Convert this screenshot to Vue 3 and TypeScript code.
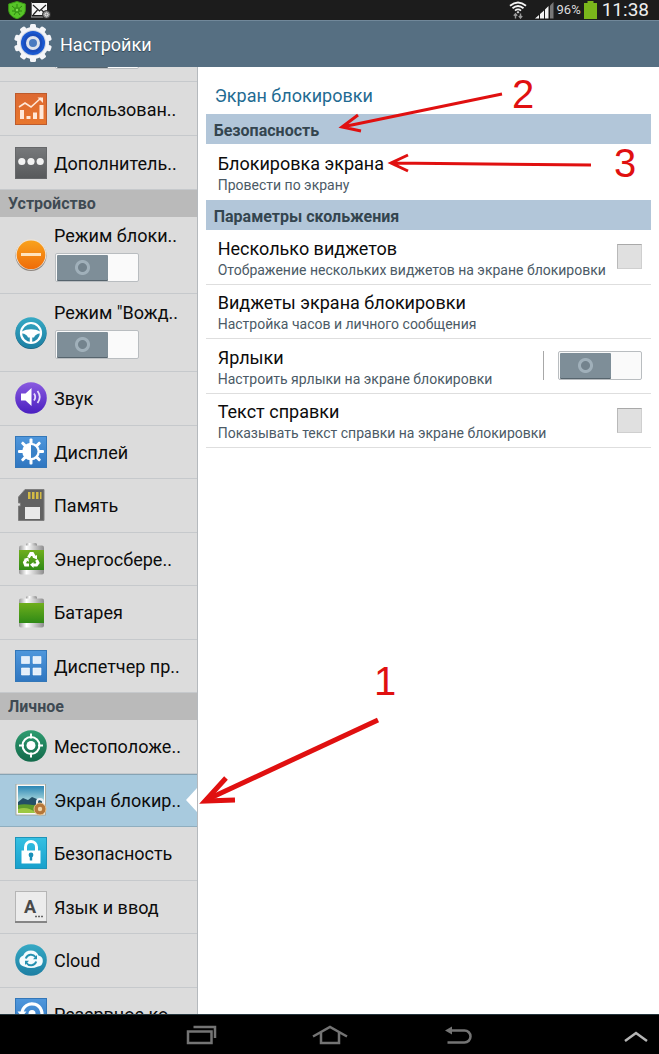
<script setup lang="ts">
import { ref } from 'vue'

interface MenuItem {
  id: string
  label: string
}

const connections: MenuItem[] = [
  { id: 'usage', label: 'Использован..' },
  { id: 'more', label: 'Дополнитель..' },
]

const modes = ref([
  { id: 'blocking', label: 'Режим блоки..', on: false },
  { id: 'driving', label: 'Режим "Вожд..', on: false },
])

const groups: { id: string; title: string; items: MenuItem[] }[] = [
  { id: 'connections', title: '', items: connections },
  {
    id: 'device',
    title: 'Устройство',
    items: [
      { id: 'sound', label: 'Звук' },
      { id: 'display', label: 'Дисплей' },
      { id: 'storage', label: 'Память' },
      { id: 'saving', label: 'Энергосбере..' },
      { id: 'battery', label: 'Батарея' },
      { id: 'apps', label: 'Диспетчер пр..' },
    ],
  },
  {
    id: 'personal',
    title: 'Личное',
    items: [
      { id: 'location', label: 'Местоположе..' },
      { id: 'lock', label: 'Экран блокир..' },
      { id: 'security', label: 'Безопасность' },
      { id: 'language', label: 'Язык и ввод' },
      { id: 'cloud', label: 'Cloud' },
      { id: 'backup', label: 'Резервное ко..' },
    ],
  },
]

const selected = ref('lock')
const previousSwitch = ref(false)

const options = ref([
  { id: 'multi', title: 'Несколько виджетов', note: 'Отображение нескольких виджетов на экране блокировки', control: 'check', on: false },
  { id: 'widgets', title: 'Виджеты экрана блокировки', note: 'Настройка часов и личного сообщения', control: '', on: false },
  { id: 'shortcuts', title: 'Ярлыки', note: 'Настроить ярлыки на экране блокировки', control: 'switch', on: false },
  { id: 'help', title: 'Текст справки', note: 'Показывать текст справки на экране блокировки', control: 'check', on: false },
])

const teeth = [0, 36, 72, 108, 144, 180, 216, 252, 288, 324]
const rays = [0, 45, 90, 135, 180, 225, 270, 315]
</script>

<template>
  <div class="screen">
    <svg class="defs" width="0" height="0" aria-hidden="true">
      <defs>
        <linearGradient id="gOrange" x1="0" y1="0" x2="0" y2="1"><stop offset="0" stop-color="#dd6a33" /><stop offset="1" stop-color="#e8762c" /></linearGradient>
        <linearGradient id="gAmber" x1="0" y1="0" x2="0" y2="1"><stop offset="0" stop-color="#f9a21c" /><stop offset="1" stop-color="#ef6c0a" /></linearGradient>
        <linearGradient id="gViolet" x1="0" y1="0" x2="0" y2="1"><stop offset="0" stop-color="#8a5be0" /><stop offset="1" stop-color="#4a1fc0" /></linearGradient>
        <linearGradient id="gBlue" x1="0" y1="0" x2="0" y2="1"><stop offset="0" stop-color="#4f97dc" /><stop offset="1" stop-color="#2f76c0" /></linearGradient>
        <linearGradient id="gGray" x1="0" y1="0" x2="0" y2="1"><stop offset="0" stop-color="#77797b" /><stop offset="1" stop-color="#57595b" /></linearGradient>
        <linearGradient id="gGreen" x1="0" y1="0" x2="0" y2="1"><stop offset="0" stop-color="#6fae1c" /><stop offset="1" stop-color="#2f8a16" /></linearGradient>
        <linearGradient id="gMetal" x1="0" y1="0" x2="1" y2="0"><stop offset="0" stop-color="#9a9a9a" /><stop offset=".3" stop-color="#ffffff" /><stop offset="1" stop-color="#8d8d8d" /></linearGradient>
        <linearGradient id="gTeal" x1="0" y1="0" x2="0" y2="1"><stop offset="0" stop-color="#36a9c4" /><stop offset="1" stop-color="#1d7fa3" /></linearGradient>
        <linearGradient id="gSky" x1="0" y1="0" x2="0" y2="1"><stop offset="0" stop-color="#2b86b4" /><stop offset=".6" stop-color="#b4dfe0" /><stop offset="1" stop-color="#d9eedb" /></linearGradient>
        <linearGradient id="gForest" x1="0" y1="0" x2="0" y2="1"><stop offset="0" stop-color="#2f9c70" /><stop offset="1" stop-color="#12694a" /></linearGradient>
        <linearGradient id="gCyan" x1="0" y1="0" x2="0" y2="1"><stop offset="0" stop-color="#35c0e2" /><stop offset="1" stop-color="#18a0cc" /></linearGradient>
      </defs>
    </svg>

    <header class="status">
      <svg width="18" height="18" viewBox="0 0 18 18" aria-hidden="true">
        <path d="M9 .5 17.300 3v6c0 4.500-4 7.500-8.300 8.700C4.700 16.500.7 13.500.7 9V3z" fill="#57c428" stroke="#3b9a16" />
        <path d="M9 3v3M4 5l3 2.500M14 5l-3 2.500M4 10h3M14 10h-3M6 14l2-3M12 14l-2-3" stroke="#2f8510" stroke-width="1" />
        <circle cx="9" cy="9" r="3" fill="#3a9a18" /><circle cx="9" cy="9" r="1.200" fill="#85de55" />
      </svg>
      <svg width="20" height="17" viewBox="0 0 20 17" aria-hidden="true">
        <rect x="1" y="1" width="15" height="12" fill="#f4f4f4" /><path d="M2 3l6.500 6L15 3M2 13l4.500-5M15 12l-4.500-4" fill="none" stroke="#222" stroke-width="1.200" />
        <path d="M0 0v15h13" fill="none" stroke="#aaa" /><circle cx="15.500" cy="12.500" r="4" fill="#8c8c8c" stroke="#222" /><circle cx="15.500" cy="12.500" r="1.500" fill="none" stroke="#eee" />
      </svg>
      <span class="spacer"></span>
      <svg class="wifi" width="18" height="18" viewBox="0 0 18 18" fill="none" stroke="#f4f4f4" stroke-width="1.800" aria-hidden="true">
        <path d="M1 4.800Q9-1.800 17 4.800M3.500 7.300Q9 2.700 14.500 7.300M6 9.600Q9 7.200 12 9.600" /><circle cx="9" cy="11.300" r=".8" fill="#f4f4f4" stroke-width=".6" />
        <path d="M6.500 17.500v-4M4.800 14.800l1.700-2 1.700 2M11.500 12.500v4M9.800 15l1.700 2 1.700-2" stroke="#999" stroke-width="1.400" />
      </svg>
      <svg class="signal" width="19" height="18" viewBox="0 0 19 18" aria-hidden="true">
        <path d="M0 17.500 4 14v3.500zM5 13l4-3.500v8H5zM10 8.500 13.500 5v12.500H10z" fill="#f4f4f4" /><path d="M15 4.500 18.500 1v16.500H15z" fill="#777" />
      </svg>
      <span class="percent">96%</span>
      <svg width="13" height="18" viewBox="0 0 13 18" aria-hidden="true"><path d="M3.500 0h6v2H13v16H0V2h3.500z" fill="#7ab61b" /></svg>
      <time class="clock">11:38</time>
    </header>

    <div class="titlebar">
      <svg width="40" height="40" viewBox="0 0 40 40" aria-hidden="true">
        <g fill="#f4f5f8"><rect v-for="a in teeth" :key="a" x="17" y="1" width="6" height="8" rx="1.500" :transform="`rotate(${a} 20 20)`" /><circle cx="20" cy="20" r="16" /></g>
        <circle cx="20" cy="20" r="13" fill="#cfd5e2" /><circle cx="20" cy="20" r="12" fill="#1a58d0" /><circle cx="20" cy="20" r="9.500" fill="#1b4dbb" />
        <circle cx="20" cy="20" r="5.500" fill="#4a7ac0" stroke="#dde2ec" stroke-width="3" />
      </svg>
      <h1>Настройки</h1>
    </div>

    <div class="body">
      <nav class="sidebar" aria-label="Настройки">
        <div class="cut">
          <input v-model="previousSwitch" class="switch" type="checkbox" role="switch" aria-label="Настройки" />
        </div>
        <section v-for="g in groups" :key="g.id">
          <h2 v-if="g.title" class="side-title">{{ g.title }}</h2>
          <template v-if="g.id === 'device'">
            <div v-for="m in modes" :key="m.id" class="mode">
              <svg class="icon" viewBox="0 0 32 32" aria-hidden="true">
                <template v-if="m.id === 'blocking'">
                  <circle cx="16" cy="16.500" r="15.500" fill="#8f8780" /><circle cx="16" cy="15.500" r="15.300" fill="#eee3d6" /><circle cx="16" cy="15.800" r="14.300" fill="url(#gAmber)" /><rect x="6" y="14" width="20" height="3" fill="#ffe3bd" />
                </template>
                <template v-else>
                  <circle cx="16" cy="16.500" r="15.500" fill="#17617e" /><circle cx="16" cy="15.700" r="15.500" fill="url(#gTeal)" />
                  <circle cx="16" cy="16" r="10" fill="none" stroke="#fff" stroke-width="2.200" />
                  <path d="M7 14.500c5-3 13-3 18 0v2c-3 .2-5 1.500-6 4H13c-1-2.500-3-3.800-6-4z" fill="#fff" /><path d="M16 19v7" stroke="#fff" stroke-width="2.500" />
                </template>
              </svg>
              <div class="mode-text">
                <label :for="m.id">{{ m.label }}</label>
                <input :id="m.id" v-model="m.on" class="switch" type="checkbox" role="switch" />
              </div>
            </div>
          </template>
          <div class="items" :class="{ long: g.items.length > 2 }">
            <a v-for="i in g.items" :key="i.id" href="#" class="item" :class="{ active: selected === i.id }" @click.prevent="selected = i.id">
              <svg class="icon" viewBox="0 0 32 32" aria-hidden="true">
                <template v-if="i.id === 'usage'">
                  <rect x=".5" y=".5" width="31" height="31" fill="url(#gOrange)" stroke="#bd5b2c" />
                  <path d="M4 14l6-4 6 4L26 5" fill="none" stroke="#ffe8d8" stroke-width="1.600" /><path d="M22.500 4.500H28V10z" fill="#ffe8d8" />
                  <path d="M5 17h4v9H5zM11.500 23h4v3h-4zM18 19.500h4V26h-4zM24.500 12h4v14h-4z" fill="#ffe8d8" />
                </template>
                <template v-else-if="i.id === 'more'">
                  <rect x=".5" y=".5" width="31" height="31" fill="url(#gGray)" stroke="#66686a" />
                  <g fill="#f2f2f2"><circle cx="6.800" cy="14.500" r="3.600" /><circle cx="16" cy="14.500" r="3.600" /><circle cx="25.200" cy="14.500" r="3.600" /></g>
                </template>
                <template v-else-if="i.id === 'sound'">
                  <circle cx="16" cy="16" r="15.800" fill="url(#gViolet)" /><path d="M6 11.500h4.500l6-5.500v18l-6-5.500H6z" fill="#fff" />
                  <path d="M19 11.500q2.500 3.500 0 7M22.500 9q4.500 6 0 12" fill="none" stroke="#e6dcfb" stroke-width="1.800" />
                </template>
                <template v-else-if="i.id === 'display'">
                  <rect x=".5" y=".5" width="31" height="31" fill="url(#gBlue)" stroke="#3377b8" />
                  <g fill="#fff"><rect v-for="a in rays" :key="a" x="14.500" y="2.500" width="3" height="6" rx="1" :transform="`rotate(${a} 16 15.500)`" /><circle cx="16" cy="15.500" r="8.800" /></g>
                  <path d="M16 9a6.500 6.500 0 0 1 0 13z" fill="#3b82c8" />
                </template>
                <template v-else-if="i.id === 'storage'">
                  <path d="M10 .5h19v31H3.500V17h2v-3h-2V8z" fill="#626262" stroke="#7e7e7e" /><path d="M13 3h2.500v7H13zM17 3h2.500v7H17zM21 3h2.500v7H21zM25 3h1.500v7H25z" fill="#d4bb45" /><path d="M10 18h15v12H10z" fill="#e9e9e9" />
                </template>
                <template v-else-if="i.id === 'saving' || i.id === 'battery'">
                  <rect x="11" y="0" width="11" height="5" rx="1.500" fill="url(#gMetal)" /><rect x="4" y="2.500" width="25" height="29" rx="2" fill="url(#gMetal)" /><rect x="4" y="7" width="25" height="20" fill="url(#gGreen)" />
                  <g v-if="i.id === 'saving'" fill="none" stroke="#fff" stroke-width="3"><path d="M13.500 14.500 15.800 10.500h1.700l2 3.500M21.500 17l1.500 2.800-1.500 2.200h-4M14 22h-3.500L9.500 19.500 11 17" /></g>
                  <g v-if="i.id === 'saving'" fill="#fff"><path d="M22 12v4.500l-4.500-2zM18.500 19v6l-3.500-3.200zM8.500 16l4.800-1.500.7 4.200z" /></g>
                </template>
                <template v-else-if="i.id === 'apps'">
                  <rect x=".5" y=".5" width="31" height="31" fill="url(#gBlue)" stroke="#3377b8" /><path d="M6.500 6.500h8v7h-8zM18 6.500h8v7h-8zM6.500 18h8v7h-8zM18 18h8v7h-8z" fill="#e4eefa" stroke="#fff" stroke-width=".6" />
                </template>
                <template v-else-if="i.id === 'location'">
                  <circle cx="16" cy="16" r="15.800" fill="url(#gForest)" /><g fill="none" stroke="#fff" stroke-width="2"><circle cx="16" cy="15.500" r="8.500" /><path d="M16 3.500v5M16 22.500v5M4 15.500h5M23 15.500h5" /></g><circle cx="16" cy="15.500" r="4.500" fill="#fff" />
                </template>
                <template v-else-if="i.id === 'lock'">
                  <rect x="1" y="0" width="29.500" height="31" fill="#fafafa" stroke="#9c9c8c" stroke-width=".8" /><rect x="3" y="2" width="26" height="27" fill="url(#gSky)" />
                  <path d="M3 18l5-4 5 2 4-3 12 5v11H3z" fill="#234f66" /><path d="M3 21q8-2 26 2v6H3z" fill="#5e9c2c" /><path d="M3 25q10-3 18 4H3z" fill="#9cc842" />
                  <path d="M22 21v-3a3 3 0 0 1 6 0v3" fill="none" stroke="#e9eff5" stroke-width="2" /><circle cx="25" cy="25" r="6" fill="#b5773a" stroke="#e8c28b" /><circle cx="25" cy="25" r="2.200" fill="#efd5a8" />
                </template>
                <template v-else-if="i.id === 'security'">
                  <rect x=".5" y=".5" width="31" height="31" fill="url(#gCyan)" stroke="#1e93b8" /><path d="M10.500 14V10a5.500 5.500 0 0 1 11 0v4" fill="none" stroke="#fff" stroke-width="3" /><path d="M6.500 13.500h19v13h-19z" fill="#fff" />
                  <circle cx="16" cy="18" r="2.400" fill="#1a8fb8" /><path d="M14.800 18h2.400v5.500h-2.400z" fill="#1a8fb8" />
                </template>
                <template v-else-if="i.id === 'language'">
                  <rect x=".5" y=".5" width="31" height="31" fill="#ececec" stroke="#b5b5b5" /><path d="M0 31h32" stroke="#858585" stroke-width="2" />
                  <text x="9" y="22" class="letter">A</text><path d="M20 25.500h2M23 25.500h2M26 25.500h2" stroke="#666" stroke-width="1.500" />
                </template>
                <template v-else-if="i.id === 'cloud'">
                  <circle cx="16" cy="16" r="15.800" fill="url(#gTeal)" /><path d="M9 22.500a5.700 5.700 0 0 1-.8-11A8.300 8.300 0 0 1 23.500 11.500a5.600 5.600 0 0 1-.5 11q-7 3-14 0z" fill="#f4fbfd" />
                  <path d="M10.800 14.500a5.500 5.500 0 0 1 9.700-1.500M21.200 17.500a5.500 5.500 0 0 1-9.700 1.500" fill="none" stroke="#2591b0" stroke-width="2" /><path d="M22 11v4.200h-4zM10 21v-4.200h4z" fill="#2591b0" />
                </template>
                <template v-else>
                  <rect x=".5" y=".5" width="31" height="31" fill="url(#gBlue)" stroke="#3377b8" /><path d="M7 15a10 10 0 1 1 3 8" fill="none" stroke="#fff" stroke-width="3.200" /><path d="M2.500 13.500h9L7 19z" fill="#fff" /><circle cx="17" cy="15.500" r="3.500" fill="#fff" />
                </template>
              </svg>
              <span class="item-label">{{ i.label }}</span>
            </a>
          </div>
        </section>
      </nav>

      <main class="content">
        <h2 class="heading">Экран блокировки</h2>
        <h3 class="band">Безопасность</h3>
        <a href="#" class="option first" @click.prevent>
          <span class="texts"><span class="name">Блокировка экрана</span><span class="note">Провести по экрану</span></span>
        </a>
        <h3 class="band">Параметры скольжения</h3>
        <div class="options">
          <div v-for="o in options" :key="o.id" class="option">
            <label class="texts" :for="o.control ? o.id : undefined"><span class="name">{{ o.title }}</span><span class="note">{{ o.note }}</span></label>
            <input v-if="o.control === 'check'" :id="o.id" v-model="o.on" class="check" type="checkbox" />
            <div v-else-if="o.control === 'switch'" class="divided"><input :id="o.id" v-model="o.on" class="switch" type="checkbox" role="switch" /></div>
          </div>
        </div>
      </main>
    </div>

    <footer class="navbar">
      <div class="keys">
        <button type="button" aria-label="Недавние"><svg width="32" height="20" viewBox="0 0 32 20"><path d="M2 6.500h23.500V18H2zM7.500 2H29v11" /></svg></button>
        <button type="button" aria-label="Домой"><svg width="36" height="20" viewBox="0 0 36 20"><path d="M1 11.500 18 2l17 9.500M9 7v11h18V7" /></svg></button>
        <button type="button" aria-label="Назад"><svg width="28" height="20" viewBox="0 0 28 20"><path d="M6 5.500h14.500a5.500 5.500 0 0 1 0 12H3.500" /><path d="M1 5.500 8 1.500v8z" class="solid" /></svg></button>
      </div>
      <button type="button" class="up" aria-label="Вверх"><svg width="24" height="12" viewBox="0 0 24 12"><path d="M1 10 12 2l11 8" /></svg></button>
    </footer>

    <svg class="marks" width="659" height="1054" viewBox="0 0 659 1054">
      <g fill="none" stroke="#e01010">
        <path d="M378 720 206 800" stroke-width="5" /><path d="M226 778 205 801 235 800" stroke-width="5" />
        <path d="M502 94 342 127M358 115 342 127 361 131" stroke-width="3" />
        <path d="M591 165 391 163M408 155 391 163 408 171" stroke-width="3" />
      </g>
      <text x="374" y="695">1</text><text x="512" y="108">2</text><text x="614" y="177">3</text>
    </svg>
  </div>
</template>

<style>
body { margin: 0; }
</style>

<style scoped>
.screen { position: relative; display: flex; flex-direction: column; height: 100vh; overflow: hidden; background: #fff; color: #0c0c0c; font: 18px/22px Roboto, "Noto Sans", sans-serif; }
.screen * { box-sizing: border-box; }
.defs { position: absolute; }
h1, h2, h3 { margin: 0; }
a { color: inherit; text-decoration: none; }
.status { display: flex; flex: none; align-items: center; height: 20px; padding: 0 10px 0 8px; background: #1c1c1c; color: #ddd; gap: 5px; line-height: 20px; }
.spacer { flex: 1; }
.wifi { margin-right: 3px; }
.percent { margin: 0 -2px; font-size: 13px; }
.clock { color: #eee; font-size: 19px; }
.titlebar { display: flex; flex: none; align-items: center; height: 47px; padding: 0 13px 2px; gap: 7px; background: #566f82; border-top: 1px solid #71889a; }
.titlebar h1 { padding-top: 3px; color: #fff; font-size: 18px; font-weight: 400; text-shadow: 0 1px 1px #2f414f; }
.body { display: flex; flex: 1; min-height: 0; }
.sidebar { flex: 0 0 30%; overflow: hidden; background: #dcdcdc; border-right: 1px solid #b5b9bd; }
.cut { display: flex; align-items: flex-end; height: 15px; padding: 0 0 12px 55px; overflow: hidden; border-bottom: 1px solid #c6c9cc; }
.side-title { height: 27px; padding-left: 8px; background: #bababa; color: #3f4a53; font-size: 16px; line-height: 27px; }
.items { display: grid; grid-auto-rows: 54px; }
.items.long { grid-auto-rows: 1fr; height: 321px; }
.item { position: relative; display: flex; align-items: center; gap: 7px; padding-left: 15px; border-bottom: 1px solid #c6c9cc; white-space: nowrap; }
.item-label { padding-top: 2px; }
.icon { flex: none; width: 32px; height: 32px; }
.letter { font: bold 18px Roboto, sans-serif; fill: #4a4a4a; }
.item.active { background: #a8cade; border-top: 1px solid #86a3b4; border-bottom-color: #8faebf; }
.item.active::after { content: ""; position: absolute; right: -1px; top: 50%; margin-top: -13px; border: 13px solid transparent; border-left-width: 0; border-right: 12px solid #fff; }
.mode { display: flex; align-items: center; gap: 7px; height: 78px; padding-left: 15px; border-bottom: 1px solid #c6c9cc; white-space: nowrap; }
.mode:first-of-type { height: 77px; }
.mode-text { display: flex; flex-direction: column; align-items: flex-start; gap: 6px; padding-bottom: 4px; }
.switch { appearance: none; flex: none; width: 84px; height: 29px; margin: 0; padding: 1px; background: #fafafa; border: 1px solid #b9bdc0; border-radius: 2px; }
.mode .switch { margin-left: 1px; }
.switch::before { content: ""; display: block; width: 51px; height: 25px; border-radius: 1px; background: radial-gradient(circle at 50% 50%, #73838d 0 4px, #a0b0ba 5px 7px, transparent 8px), #7e8e98; box-shadow: 0 1px 0 #56646d; }
.switch:checked::before { margin-left: auto; }
.content { flex: 1; min-width: 0; padding: 0 8px; }
.heading { height: 47px; padding: 7px 9px 0; color: #1f6b92; font-size: 18px; font-weight: 400; line-height: 44px; }
.band { height: 30px; padding: 2px 8px 0; background: #b2c6d9; color: #34454f; font-size: 16px; line-height: 30px; }
.options { display: grid; grid-auto-rows: 1fr; height: 218px; }
.option { display: flex; align-items: center; padding: 0 9px 0 12px; border-bottom: 1px solid #dedede; }
.option.first { height: 56px; border: 0; }
.texts { display: flex; flex: 1; flex-direction: column; min-width: 0; padding-top: 4px; white-space: nowrap; }
.note { color: #4b5a66; font-size: 14px; line-height: 20px; }
.check { appearance: none; flex: none; width: 25px; height: 25px; margin: 0; background: #e0e0e0; border: 1px solid #cfcfcf; border-top-color: #a9a9a9; border-left-color: #b9b9b9; }
.check:checked { background: #6fa32b; }
.divided { display: flex; padding-left: 14px; border-left: 1px solid #a8a8a8; }
.navbar { position: relative; display: flex; flex: none; justify-content: center; height: 40px; background: #000; border-top: 1px solid #24353c; }
.keys { display: flex; }
.navbar button { display: flex; align-items: center; justify-content: center; width: 128px; padding: 0; background: none; border: 0; }
.navbar path { fill: none; stroke: #747474; stroke-width: 2.5; }
.navbar .solid { fill: #747474; stroke: none; }
.navbar .up { position: absolute; right: 11px; top: 0; bottom: 0; width: 24px; padding-top: 4px; }
.navbar .up path { stroke: #b5b5b5; }
.marks { position: absolute; left: 0; top: 0; pointer-events: none; }
.marks text { fill: #e01010; font: 40px "Liberation Sans", sans-serif; }
</style>
